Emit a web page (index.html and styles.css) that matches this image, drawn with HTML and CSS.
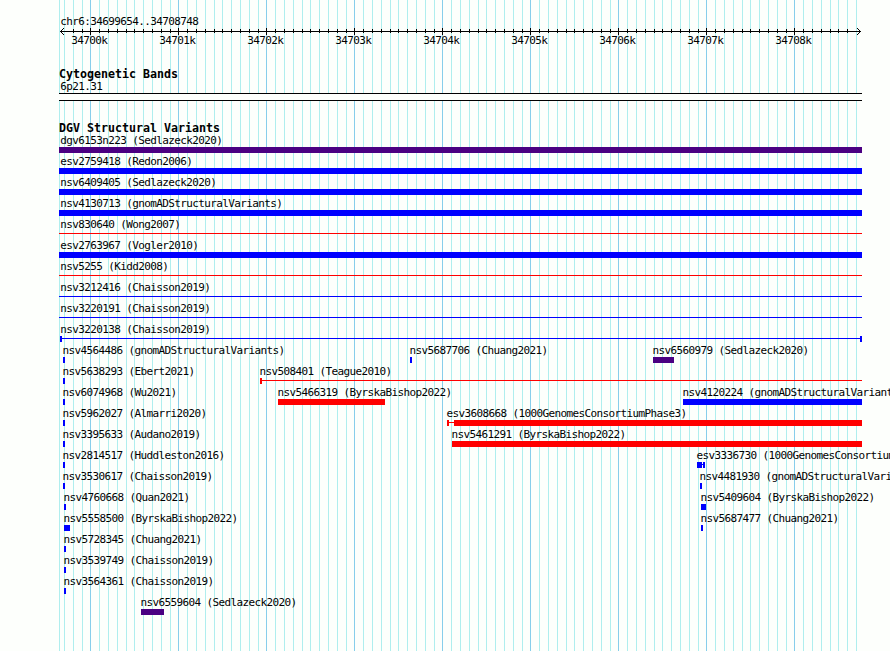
FILE: index.html
```html
<!DOCTYPE html>
<html lang="en">
  <head>
    <meta charset="UTF-8" />
    <meta name="viewport" content="width=device-width, initial-scale=1.0" />
    <title>chr6:34699654..34708748</title>
    <link rel="stylesheet" href="styles.css">
  </head>
  <body>
    <div class="panel">
      <div class="region">chr6:34699654..34708748</div>
      <svg class="ruler" id="ruler" width="803" height="7" viewBox="0 0 803 7" shape-rendering="crispEdges">
        <path d="M1 3h801v1h-801z" />
        <path d="M1 3h1v1h-1zM2 2h1v3h-1zM3 1h1v1h-1zM3 5h1v1h-1zM4 0h1v1h-1zM4 6h1v1h-1z" />
        <path d="M801 3h1v1h-1zM800 2h1v3h-1zM799 1h1v1h-1zM799 5h1v1h-1zM798 0h1v1h-1zM798 6h1v1h-1z" />
      </svg>
      <div class="scale">
        <span>34700k</span>
        <span>34701k</span>
        <span>34702k</span>
        <span>34703k</span>
        <span>34704k</span>
        <span>34705k</span>
        <span>34706k</span>
        <span>34707k</span>
        <span>34708k</span>
      </div>

      <h2 class="bands-title">Cytogenetic Bands</h2>
      <div class="band-name">6p21.31</div>
      <div class="band"></div>

      <h2 class="variants-title">DGV Structural Variants</h2>
      <div id="variants"></div>
    </div>

    <script src="variants.js"></script>
  </body>
</html>
```
FILE: styles.css
```css
body {
    margin: 0;
    background-color: #fdfffc;
    color: #000;
    font-family: "DejaVu Sans Mono", monospace;
    font-size: 11px;
    line-height: 13px;
    letter-spacing: -0.622px;
    white-space: nowrap;
    overflow: hidden;
}
.panel {
    box-sizing: border-box;
    width: 803px;
    height: 651px;
    margin-left: 59px;
    padding-top: 15px;
    /* one kilobase is 88px wide, split in ten */
    background-image:
        linear-gradient(#afeeee, #afeeee),
        linear-gradient(90deg,
            #87ceeb 1px, transparent 1px 9px,
            #afeeee 9px 10px, transparent 10px 18px,
            #afeeee 18px 19px, transparent 19px 27px,
            #afeeee 27px 28px, transparent 28px 36px,
            #afeeee 36px 37px, transparent 37px 44px,
            #afeeee 44px 45px, transparent 45px 53px,
            #afeeee 53px 54px, transparent 54px 62px,
            #afeeee 62px 63px, transparent 63px 71px,
            #afeeee 71px 72px, transparent 72px 80px,
            #afeeee 80px 81px, transparent 81px);
    background-size: 1px 100%, 88px 100%;
    background-position: 0 0, 31px 0;
    background-repeat: no-repeat, repeat;
}
.region {
    padding-left: 1.3px;
}
.ruler {
    display: block;
}
.scale {
    display: flex;
    margin-top: -1px;
    padding-left: 12.3px;
}
.scale span {
    flex: none;
    width: 88px;
}
h2 {
    margin: 0;
    font-size: 11.63px;
    font-weight: bold;
    line-height: 13px;
    letter-spacing: 0;
}
.bands-title {
    margin-top: 21px;
}
.band-name {
    margin-top: -1px;
    padding-left: 1.3px;
}
.band {
    height: 6px;
    border-top: 1px solid #000;
    border-bottom: 1px solid #000;
    background-color: #fdfffc;
}
.variants-title {
    margin-top: 21px;
}
.row {
    display: grid;
    height: 21px;
}
.row:first-child {
    margin-top: -1px;
}
.feature {
    grid-area: 1 / 1;
    width: 0;
}
.name {
    height: 13px;
    margin-left: -0.6px;
}
.glyph {
    display: flex;
    height: 6px;
}
.bar {
    flex: none;
    background-color: currentColor;
}
.line {
    flex: none;
    height: 1px;
    margin-top: 2px;
    background-color: currentColor;
}
.gain {
    color: #00f;
}
.loss {
    color: #f00;
}
.mixed {
    color: #4b0082;
}
.wide .name {
    margin-left: 1.3px;
}
.wide.capped .name {
    margin-left: 0.3px;
}
```
FILE: variants.js
```js
const ruler = document.getElementById('ruler')
const variants = document.getElementById('variants')
const KB = 88
const FIRST_KB = 31

// Each feature: name, study, start, type, parts ("b" = bar, "l" = line, followed by width)
const rows = [
  [['dgv6153n223', 'Sedlazeck2020', 0, 'mixed', 'b803']],
  [['esv2759418', 'Redon2006', 0, 'gain', 'b803']],
  [['nsv6409405', 'Sedlazeck2020', 0, 'gain', 'b803']],
  [['nsv4130713', 'gnomADStructuralVariants', 0, 'gain', 'b803']],
  [['nsv830640', 'Wong2007', 0, 'loss', 'l803']],
  [['esv2763967', 'Vogler2010', 0, 'gain', 'b803']],
  [['nsv5255', 'Kidd2008', 0, 'loss', 'l803']],
  [['nsv3212416', 'Chaisson2019', 0, 'gain', 'l803']],
  [['nsv3220191', 'Chaisson2019', 0, 'gain', 'l803']],
  [['nsv3220138', 'Chaisson2019', 1, 'gain', 'b2 l798 b2']],
  [
    ['nsv4564486', 'gnomADStructuralVariants', 4, 'gain', 'b2'],
    ['nsv5687706', 'Chuang2021', 351, 'gain', 'b2'],
    ['nsv6560979', 'Sedlazeck2020', 594, 'mixed', 'b21']
  ],
  [
    ['nsv5638293', 'Ebert2021', 4, 'gain', 'b2'],
    ['nsv508401', 'Teague2010', 201, 'loss', 'b2 l600']
  ],
  [
    ['nsv6074968', 'Wu2021', 4, 'gain', 'b2'],
    ['nsv5466319', 'ByrskaBishop2022', 219, 'loss', 'b107'],
    ['nsv4120224', 'gnomADStructuralVariants', 624, 'gain', 'b179']
  ],
  [
    ['nsv5962027', 'Almarri2020', 4, 'gain', 'b2'],
    ['esv3608668', '1000GenomesConsortiumPhase3', 388, 'loss', 'b2 l5 b408']
  ],
  [
    ['nsv3395633', 'Audano2019', 4, 'gain', 'b2'],
    ['nsv5461291', 'ByrskaBishop2022', 393, 'loss', 'b410']
  ],
  [
    ['nsv2814517', 'Huddleston2016', 4, 'gain', 'b2'],
    ['esv3336730', '1000GenomesConsortiumPhase3', 638, 'gain', 'b5 l1 b2']
  ],
  [
    ['nsv3530617', 'Chaisson2019', 4, 'gain', 'b2'],
    ['nsv4481930', 'gnomADStructuralVariants', 641, 'gain', 'b2']
  ],
  [
    ['nsv4760668', 'Quan2021', 5, 'gain', 'b2'],
    ['nsv5409604', 'ByrskaBishop2022', 642, 'gain', 'b5']
  ],
  [
    ['nsv5558500', 'ByrskaBishop2022', 5, 'gain', 'b6'],
    ['nsv5687477', 'Chuang2021', 642, 'gain', 'b2']
  ],
  [['nsv5728345', 'Chuang2021', 5, 'gain', 'b2']],
  [['nsv3539749', 'Chaisson2019', 5, 'gain', 'b2']],
  [['nsv3564361', 'Chaisson2019', 5, 'gain', 'b2']],
  [['nsv6559604', 'Sedlazeck2020', 82, 'mixed', 'b23']]
]

// Ticks every 100 bases, longer ones on each kilobase
let ticks = ''
for (let i = -2; i <= 86; i++) {
  const x = FIRST_KB + Math.ceil((i * KB) / 10)
  ticks += i % 10 === 0 ? `M${x} 0h1v7h-1z` : `M${x} 1h1v4h-1z`
}
ruler.insertAdjacentHTML('beforeend', `<path d="${ticks}" />`)

// Features that cover the whole region get their name at the panel's edge
function featureClass(start) {
  if (start === 0) return 'feature wide'
  if (start === 1) return 'feature wide capped'
  return 'feature'
}

// Load the variants
rows.forEach((features) => {
  const row = document.createElement('div')
  row.className = 'row'
  row.innerHTML = features
    .map(([name, study, start, type, parts]) => {
      const glyph = parts
        .split(' ')
        .map((part) => `<div class="${part[0] === 'b' ? 'bar' : 'line'}" style="width: ${part.slice(1)}px"></div>`)
        .join('')
      return `
        <div class="${featureClass(start)}" style="margin-left: ${start}px">
          <div class="name">${name} (${study})</div>
          <div class="glyph ${type}">${glyph}</div>
        </div>`
    })
    .join('')
  variants.appendChild(row)
})
```
